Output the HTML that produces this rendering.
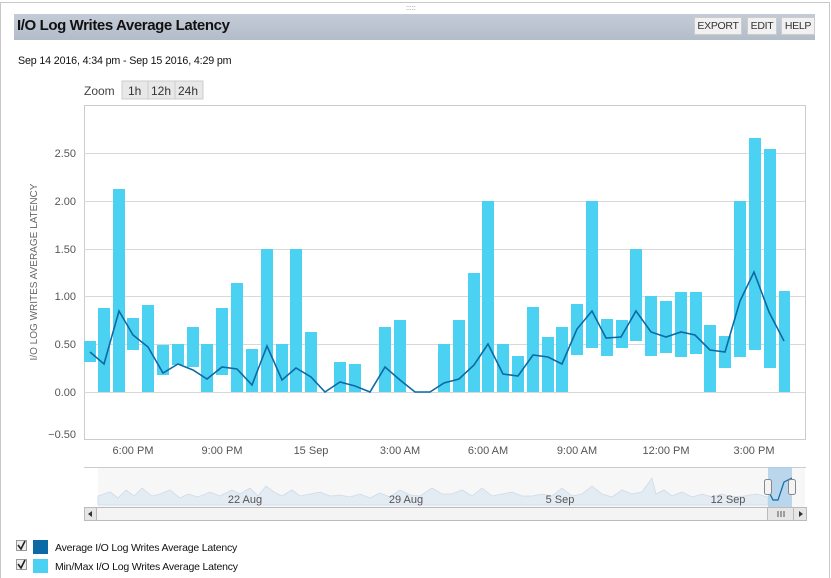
<!DOCTYPE html>
<html><head><meta charset="utf-8"><style>
body{margin:0;width:831px;height:578px;background:#fff;font-family:"Liberation Sans",sans-serif;overflow:hidden;position:relative}
.frame{position:absolute;left:0;top:2px;width:828px;height:575px;border:1px solid #c8c8c8;border-bottom:none}
.hdr{position:absolute;left:14px;top:14px;width:801px;height:26px;background:linear-gradient(#c3cbd6,#b3bdc9)}
.hdr h1{margin:0;position:absolute;left:3px;top:3px;font-size:15px;font-weight:bold;color:#111;letter-spacing:-0.4px}
.btn{position:absolute;top:3px;height:16px;background:#f1f1f1;border:1px solid #ccc;font-size:10.5px;line-height:16px;color:#333;text-align:center;letter-spacing:-0.3px}
.t{position:absolute;font-size:10.7px;color:#111;letter-spacing:-0.15px}
</style></head><body>
<div class="frame"></div>
<div style="position:absolute;left:406px;top:5px;font-size:7px;color:#777;letter-spacing:0">:::::</div>
<div class="hdr"><h1>I/O Log Writes Average Latency</h1>
<div class="btn" style="left:680px;width:46px">EXPORT</div>
<div class="btn" style="left:733px;width:28px">EDIT</div>
<div class="btn" style="left:767px;width:32px">HELP</div></div>
<div class="t" style="left:18px;top:55px">Sep 14 2016, 4:34 pm - Sep 15 2016, 4:29 pm</div>
<svg width="831" height="578" style="position:absolute;left:0;top:0" font-family="Liberation Sans, sans-serif">
<text x="84" y="95" font-size="12" fill="#444">Zoom</text>
<rect x="122" y="81" width="81" height="18" fill="#e8e8e8" stroke="#ccc"/>
<line x1="148" y1="81" x2="148" y2="99" stroke="#ccc"/><line x1="175" y1="81" x2="175" y2="99" stroke="#ccc"/>
<text x="128" y="95" font-size="12" fill="#333">1h</text><text x="151" y="95" font-size="12" fill="#333">12h</text><text x="178" y="95" font-size="12" fill="#333">24h</text>
<rect x="84.5" y="105.5" width="721" height="334" fill="#fff" stroke="#ccc"/>
<g stroke="#d8d8d8">
<line x1="84" y1="153.5" x2="805" y2="153.5"/><line x1="84" y1="201.5" x2="805" y2="201.5"/><line x1="84" y1="249.5" x2="805" y2="249.5"/><line x1="84" y1="296.5" x2="805" y2="296.5"/><line x1="84" y1="344.5" x2="805" y2="344.5"/><line x1="84" y1="392.5" x2="805" y2="392.5"/></g>
<g font-size="11" fill="#555" text-anchor="end">
<text x="76" y="157">2.50</text><text x="76" y="205">2.00</text><text x="76" y="253">1.50</text><text x="76" y="300">1.00</text><text x="76" y="348">0.50</text><text x="76" y="396">0.00</text><text x="76" y="438">−0.50</text></g>
<text transform="translate(37,272) rotate(-90)" font-size="10" fill="#666" text-anchor="middle">I/O LOG WRITES AVERAGE LATENCY</text>
<g fill="#4bd1f1">
<rect x="84" y="341" width="12" height="21"/><rect x="98" y="308" width="12" height="84"/><rect x="113" y="189" width="12" height="203"/><rect x="127" y="318" width="12" height="32"/><rect x="142" y="305" width="12" height="87"/><rect x="157" y="345" width="12" height="30"/><rect x="172" y="344" width="12" height="21"/><rect x="187" y="327" width="12" height="40"/><rect x="201" y="344" width="12" height="48"/><rect x="216" y="308" width="12" height="67"/><rect x="231" y="283" width="12" height="109"/><rect x="246" y="349" width="12" height="43"/><rect x="261" y="249" width="12" height="143"/><rect x="276" y="344" width="12" height="48"/><rect x="290" y="249" width="12" height="143"/><rect x="305" y="332" width="12" height="60"/><rect x="334" y="362" width="12" height="30"/><rect x="349" y="364" width="12" height="28"/><rect x="379" y="327" width="12" height="65"/><rect x="394" y="320" width="12" height="72"/><rect x="438" y="344" width="12" height="48"/><rect x="453" y="320" width="12" height="72"/><rect x="468" y="273" width="12" height="119"/><rect x="482" y="201" width="12" height="191"/><rect x="497" y="344" width="12" height="48"/><rect x="512" y="356" width="12" height="36"/><rect x="527" y="307" width="12" height="85"/><rect x="542" y="337" width="12" height="55"/><rect x="556" y="327" width="12" height="65"/><rect x="571" y="304" width="12" height="51"/><rect x="586" y="201" width="12" height="147"/><rect x="601" y="319" width="12" height="37"/><rect x="616" y="320" width="12" height="28"/><rect x="630" y="249" width="12" height="92"/><rect x="645" y="296" width="12" height="60"/><rect x="660" y="301" width="12" height="52"/><rect x="675" y="292" width="12" height="65"/><rect x="690" y="292" width="12" height="62"/><rect x="704" y="325" width="12" height="67"/><rect x="719" y="336" width="12" height="32"/><rect x="734" y="201" width="12" height="156"/><rect x="749" y="138" width="12" height="212"/><rect x="764" y="149" width="12" height="219"/><rect x="779" y="291" width="11" height="101"/></g>
<polyline fill="none" stroke="#0b6aa6" stroke-width="1.6" points="90,352 104,364 119,311 133,335 148,347 163,373 178,364 193,370 207,379 222,367 237,369 252,385 267,346 282,380 296,368 311,377 325,392 340,382 355,386 370,392 385,367 400,380 415,392 430,392 444,383 459,379 474,365 488,344 503,374 518,376 533,355 548,357 562,364 577,329 592,311 606,338 621,337 636,311 651,332 666,337 681,332 695,335 710,350 725,352 740,301 754,272 769,312 784,341"/>
<g font-size="11" fill="#555" text-anchor="middle">
<text x="133" y="454">6:00 PM</text><text x="222" y="454">9:00 PM</text><text x="311" y="454">15 Sep</text><text x="400" y="454">3:00 AM</text><text x="488" y="454">6:00 AM</text><text x="577" y="454">9:00 AM</text><text x="666" y="454">12:00 PM</text><text x="754" y="454">3:00 PM</text></g>
<rect x="98" y="467" width="707" height="40" fill="#f7f7f7"/>
<line x1="84" y1="467.5" x2="806" y2="467.5" stroke="#ccc"/>
<path d="M98,505 L98,496 110,492 118,498 126,490 134,496 142,488 152,496 160,494 170,490 180,498 188,494 198,497 210,492 220,496 232,490 240,494 250,488 258,496 266,486 274,492 282,496 292,490 300,496 310,494 320,492 330,496 340,495 350,497 360,494 370,498 380,493 390,497 400,490 410,495 420,496 432,488 442,494 452,494 462,490 472,496 482,488 492,496 502,494 512,492 522,496 532,496 542,494 552,496 562,488 572,496 582,494 592,486 602,494 612,497 622,490 632,494 642,492 652,478 656,494 664,490 672,496 682,492 692,497 702,494 712,497 722,494 732,497 744,496 756,494 768,497 L768,505Z" fill="#e3ebf3" stroke="#cfdbe8" stroke-width="0.8"/>
<rect x="768" y="467" width="24" height="40" fill="#a9cde9" opacity="0.8"/>
<path d="M768,490 L773,500 778,500 784,482 792,478" fill="none" stroke="#0b6aa6" stroke-width="1.2"/>
<g font-size="11" fill="#555" text-anchor="middle"><text x="245" y="503">22 Aug</text><text x="406" y="503">29 Aug</text><text x="560" y="503">5 Sep</text><text x="728" y="503">12 Sep</text></g>
<rect x="764.5" y="479.5" width="7" height="15" rx="2" fill="#f4f4f4" stroke="#888"/>
<rect x="788.5" y="479.5" width="7" height="15" rx="2" fill="#f4f4f4" stroke="#888"/>
<rect x="84.5" y="507.5" width="722" height="13" fill="#f4f4f4" stroke="#bbb"/>
<rect x="84.5" y="507.5" width="12" height="13" fill="#e6e6e6" stroke="#bbb"/>
<path d="M92,511 L88,514 92,517Z" fill="#333"/>
<rect x="767.5" y="507.5" width="26" height="13" fill="#e6e6e6" stroke="#bbb"/>
<rect x="793.5" y="507.5" width="13" height="13" fill="#e6e6e6" stroke="#bbb"/>
<path d="M799,511 L803,514 799,517Z" fill="#333"/>
<path d="M778,511v6M781,511v6M784,511v6" stroke="#555"/>
<rect x="16.5" y="540.5" width="10" height="10" fill="#eee" stroke="#999"/>
<path d="M18,545 L21,549 25,541" fill="none" stroke="#222" stroke-width="1.6"/>
<rect x="16.5" y="559.5" width="10" height="10" fill="#eee" stroke="#999"/>
<path d="M18,564 L21,568 25,560" fill="none" stroke="#222" stroke-width="1.6"/>
<rect x="33" y="540" width="15" height="14" fill="#0b6aa6"/>
<rect x="33" y="559" width="15" height="14" fill="#4bd1f1"/>
<text x="55" y="551" font-size="10.5" fill="#111" letter-spacing="-0.2">Average I/O Log Writes Average Latency</text>
<text x="55" y="570" font-size="10.5" fill="#111" letter-spacing="-0.2">Min/Max I/O Log Writes Average Latency</text>
</svg>
</body></html>
